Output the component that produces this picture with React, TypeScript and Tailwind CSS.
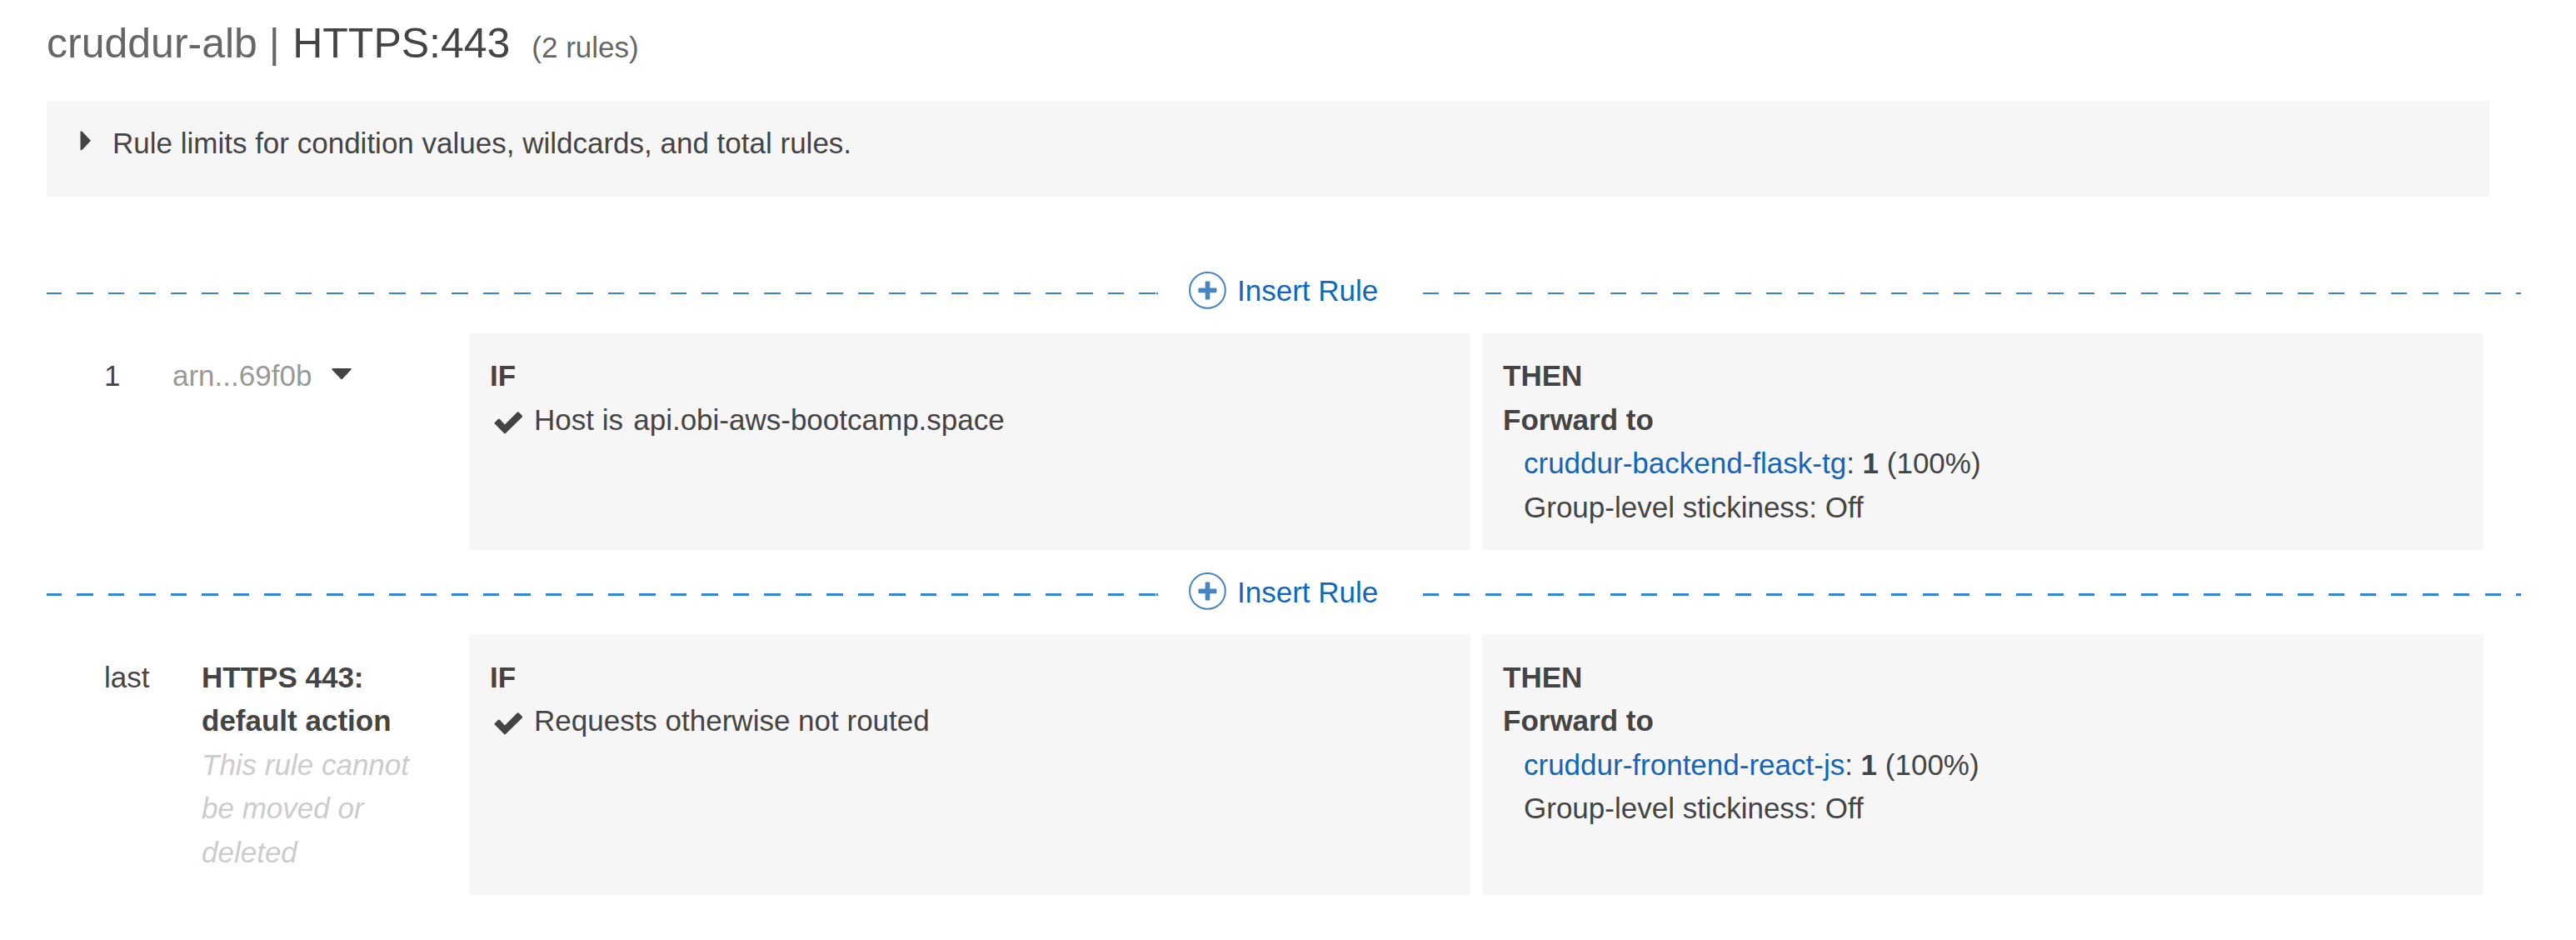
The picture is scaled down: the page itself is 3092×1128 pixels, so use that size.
import type { ReactNode } from "react";

function CheckIcon() {
  return (
    <svg className="mt-[19px] ml-[5px] h-[27px] w-[35px] shrink-0" viewBox="0 0 36 28" fill="none">
      <path
        d="M4.9 9.4 0.9 13.2a1.6 1.6 0 0 0 0 2.2L12.2 26.6a1.6 1.6 0 0 0 2.3 0L34.6 7a1.6 1.6 0 0 0 0-2.3L30.8 0.9a1.6 1.6 0 0 0-2.3 0L13.3 16 7.1 9.4a1.6 1.6 0 0 0-2.2 0Z"
        fill="#444"
      />
    </svg>
  );
}

function PlusCircle() {
  return (
    <svg className="mt-[27px] ml-[37px] size-[45px] shrink-0" viewBox="0 0 45 45" fill="none">
      <circle cx="22.4" cy="22.3" r="21.4" stroke="#4585c6" strokeWidth="2" />
      <rect x="19.7" y="11.4" width="5.6" height="22" rx="1.2" fill="#4585c6" />
      <rect x="11.4" y="19.6" width="22" height="5.6" rx="1.2" fill="#4585c6" />
    </svg>
  );
}

function InsertRule({ line, label }: { line: string; label: string }) {
  return (
    <div className="ml-14 flex h-[101px] w-[2970px] items-start">
      <div className={`mt-[52px] flex w-[1334px] ${line}`}>
        <div className="h-full w-[1332px] bg-[repeating-linear-gradient(90deg,#3385db_-1px_18.2px,transparent_18.2px_36.5px)]" />
        <div className="h-full w-[2px] bg-[#3385db]" />
      </div>
      <PlusCircle />
      <a className={`ml-[13px] w-[223px] text-[#16b] ${label}`}>Insert Rule</a>
      <div
        className={`mt-[52px] flex-1 bg-[repeating-linear-gradient(90deg,#3385db_0px_19px,transparent_19px_37.5px)] ${line}`}
      />
    </div>
  );
}

function Panel({ title, className, children }: { title: string; className: string; children: ReactNode }) {
  return (
    <div className={`w-[1202px] bg-[#f6f6f6] pl-[25px] ${className}`}>
      <div className="font-bold">{title}</div>
      {children}
    </div>
  );
}

function Forward({ target }: { target: string }) {
  return (
    <>
      <div className="font-bold">Forward to</div>
      <div className="pl-[25px]">
        <a className="text-[#16b]">{target}</a>: <b>1</b> (100%)
      </div>
      <div className="pl-[25px]">Group-level stickiness: Off</div>
    </>
  );
}

export default function App() {
  return (
    <main className="h-[1128px] w-[3092px] overflow-hidden bg-white font-['Liberation_Sans',Arial,sans-serif] text-[35px] leading-[52.5px] text-[#444]">
      <h1 className="flex h-[121px] items-baseline pt-[15px] pl-14 text-[50px] leading-[75px] whitespace-pre">
        <span className="text-[#666]">cruddur-alb | </span>
        <span className="ml-[1.5px]">HTTPS:443 </span>
        <span className="ml-[12px] text-[35px] text-[#666]">(2 rules)</span>
      </h1>

      <section className="ml-14 flex h-[115px] w-[2932px] items-start bg-[#f6f6f6] pt-[25px] pl-10">
        <svg className="mt-[11px] h-6 w-[14px]" viewBox="0 0 14 24">
          <path d="M0.5 1.2Q0.5 0 1.7 0.4L3 1.2 13 11.7 3 22.4 1.7 23.2Q0.5 23.4 0.5 22.2Z" fill="#444" />
        </svg>
        <span className="ml-[25px]">Rule limits for condition values, wildcards, and total rules.</span>
      </section>

      <div className="h-[63px]" />
      <InsertRule line="h-[2px]" label="mt-[24px]" />

      <section className="flex h-[260px]">
        <div className="flex w-[563px] items-start pt-[25px] pl-[125px]">
          <span className="w-[82px]">1</span>
          <span className="text-[#999]">arn...69f0b</span>
          <svg className="mt-[17px] ml-6 h-[14px] w-6" viewBox="0 0 24 14">
            <path d="M1 0H23Q24 0 23.5 1.5L13 12.7Q12 13.6 11 12.7L0.5 1.5Q0 0 1 0Z" fill="#444" />
          </svg>
        </div>
        <Panel title="IF" className="mr-[14px] pt-[25px]">
          <div className="flex items-start">
            <div className="-mt-[3px]"><CheckIcon /></div>
            <span className="ml-[13px]">
              Host is <span className="ml-[2.5px]">api.obi-aws-bootcamp.space</span>
            </span>
          </div>
        </Panel>
        <Panel title="THEN" className="pt-[25px]">
          <Forward target="cruddur-backend-flask-tg" />
        </Panel>
      </section>

      <InsertRule line="h-[3px]" label="mt-[25px]" />

      <section className="flex h-[313px]">
        <div className="flex w-[563px] items-start pt-[25.6px] pl-[125px]">
          <span className="w-[117px]">last</span>
          <div className="w-[260px]">
            <div className="font-bold">HTTPS 443: default action</div>
            <div className="text-[#ccc] italic">This rule cannot be moved or deleted</div>
          </div>
        </div>
        <Panel title="IF" className="mr-[14px] pt-[25.6px]">
          <div className="flex items-start">
            <div className="-mt-[3px]"><CheckIcon /></div>
            <span className="ml-[13px]">Requests otherwise not routed</span>
          </div>
        </Panel>
        <Panel title="THEN" className="pt-[25.6px]">
          <Forward target="cruddur-frontend-react-js" />
        </Panel>
      </section>
    </main>
  );
}
